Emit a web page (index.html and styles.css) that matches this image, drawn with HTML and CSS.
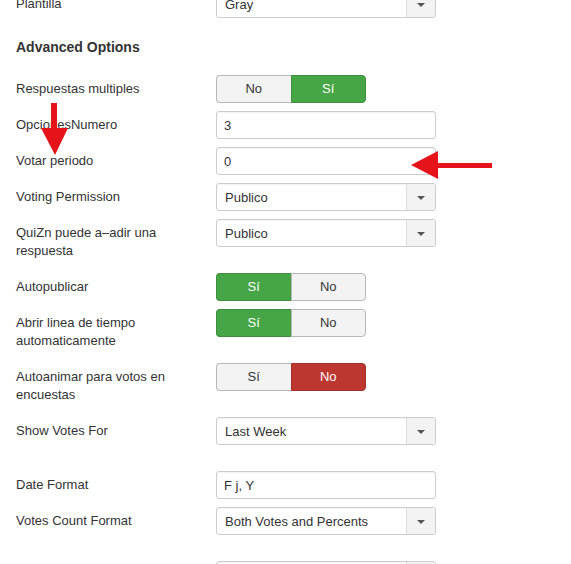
FILE: index.html
```html
<!DOCTYPE html>
<html lang="en">
<head>
  <meta charset="UTF-8" />
  <title>Poll Options</title>
  <meta name="viewport" content="width=device-width, initial-scale=1.0" />
  <link rel="stylesheet" href="styles.css">
</head>
<body>

  <div class="options">

    <div class="control-group">
      <label class="control-label">Plantilla</label>
      <div class="select"><span>Gray</span><i class="caret"></i></div>
    </div>

    <h3 class="section-title">Advanced Options</h3>

    <div class="control-group">
      <label class="control-label">Respuestas multiples</label>
      <div class="toggle">
        <span class="btn">No</span>
        <span class="btn btn-yes">Sí</span>
      </div>
    </div>

    <div class="control-group">
      <label class="control-label">OpcionesNumero</label>
      <div class="input">3</div>
    </div>

    <div class="control-group">
      <label class="control-label">Votar periodo</label>
      <div class="input">0</div>
    </div>

    <div class="control-group">
      <label class="control-label">Voting Permission</label>
      <div class="select"><span>Publico</span><i class="caret"></i></div>
    </div>

    <div class="control-group">
      <label class="control-label">QuiZn puede a–adir una respuesta</label>
      <div class="select"><span>Publico</span><i class="caret"></i></div>
    </div>

    <div class="control-group">
      <label class="control-label">Autopublicar</label>
      <div class="toggle">
        <span class="btn btn-yes">Sí</span>
        <span class="btn">No</span>
      </div>
    </div>

    <div class="control-group">
      <label class="control-label">Abrir linea de tiempo automaticamente</label>
      <div class="toggle">
        <span class="btn btn-yes">Sí</span>
        <span class="btn">No</span>
      </div>
    </div>

    <div class="control-group">
      <label class="control-label">Autoanimar para votos en encuestas</label>
      <div class="toggle">
        <span class="btn">Sí</span>
        <span class="btn btn-no">No</span>
      </div>
    </div>

    <div class="control-group spaced">
      <label class="control-label">Show Votes For</label>
      <div class="select"><span>Last Week</span><i class="caret"></i></div>
    </div>

    <div class="control-group">
      <label class="control-label">Date Format</label>
      <div class="input">F j, Y</div>
    </div>

    <div class="control-group spaced">
      <label class="control-label">Votes Count Format</label>
      <div class="select"><span>Both Votes and Percents</span><i class="caret"></i></div>
    </div>

    <!-- next field, only its top edge is on screen -->
    <div class="control-group">
      <label class="control-label"></label>
      <div class="select"><span></span><i class="caret"></i></div>
    </div>

  </div>

  <!-- annotation arrows -->
  <svg class="arrow arrow-down" width="30" height="56" viewBox="0 0 30 56">
    <rect x="10" y="0" width="6" height="26" fill="#e5141b" />
    <polygon points="0,25 27,25 14,52" fill="#e5141b" />
  </svg>

  <svg class="arrow arrow-left" width="86" height="32" viewBox="0 0 86 32">
    <rect x="24" y="13" width="57" height="5" fill="#e5141b" />
    <polygon points="0,15 27,1 27,29" fill="#e5141b" />
  </svg>

</body>
</html>
```

FILE: styles.css
```css
body {
  margin: 0;
  padding: 0;
  background: #fff;
  font-family: 'Liberation Sans', Arial, Helvetica, sans-serif;
  font-size: 13px;
  line-height: 18px;
  color: #333;
  overflow: hidden;
}

.options {
  margin-top: -10px;
  padding-left: 16px;
}

.control-group {
  display: flex;
  align-items: flex-start;
  margin-bottom: 8px;
}

.control-group.spaced {
  margin-bottom: 26px;
}

.control-label {
  width: 170px;
  min-height: 18px;
  margin-right: 30px;
  padding: 5px 0;
  flex-shrink: 0;
}

.section-title {
  margin: 0;
  padding: 12px 0 19px;
  font-size: 14px;
  line-height: 18px;
  font-weight: bold;
  color: #333;
}

.input,
.select {
  box-sizing: border-box;
  width: 220px;
  height: 28px;
  border: 1px solid #ccc;
  border-radius: 3px;
  background: #fff;
  box-shadow: inset 0 1px 1px rgba(0, 0, 0, 0.05);
  padding: 5px 7px 3px;
}

.select {
  display: flex;
  padding: 0;
}

.select span {
  flex: 1;
  padding: 5px 8px 3px;
}

.caret {
  width: 28px;
  border-left: 1px solid #ddd;
  background: #f3f3f3;
  border-radius: 0 3px 3px 0;
  position: relative;
}

.caret::after {
  content: "";
  position: absolute;
  left: 10px;
  top: 12px;
  border-left: 4px solid transparent;
  border-right: 4px solid transparent;
  border-top: 4px solid #555;
}

.toggle {
  display: flex;
  width: 150px;
  height: 28px;
}

.toggle .btn {
  box-sizing: border-box;
  flex: 1;
  text-align: center;
  line-height: 26px;
  background: #f3f3f3;
  border: 1px solid #b8b8b8;
  color: #333;
}

.toggle .btn:first-child {
  border-radius: 4px 0 0 4px;
  border-right: none;
}

.toggle .btn:last-child {
  border-radius: 0 4px 4px 0;
}

.toggle .btn-yes {
  background: #46a546;
  border-color: #3d8f3d;
  color: #fff;
}

.toggle .btn-no {
  background: #bd362f;
  border-color: #a32f29;
  color: #fff;
}

.arrow {
  position: absolute;
}

.arrow-down {
  left: 41px;
  top: 103px;
}

.arrow-left {
  left: 411px;
  top: 150px;
}
```
